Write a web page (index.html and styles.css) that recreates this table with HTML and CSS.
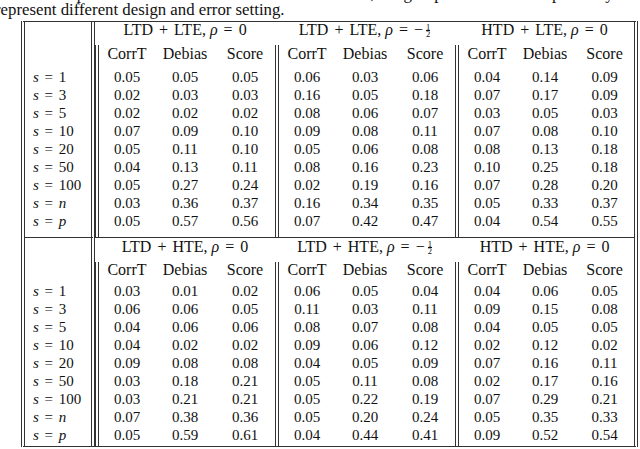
FILE: index.html
```html
<!DOCTYPE html>
<html lang="en">
<head>
  <meta charset="UTF-8" />
  <title>Empirical sizes</title>
  <link rel="stylesheet" href="styles.css">
</head>
<body>
  <p class="caption">Table 2: Empirical sizes of the tests at the nominal level, the groups of columns respectively<br>represent different design and error setting.</p>

  <table class="results">
    <colgroup>
      <col class="c-lab">
      <col class="c-num"><col class="c-num"><col class="c-num">
      <col class="c-num"><col class="c-num"><col class="c-num">
      <col class="c-num"><col class="c-num"><col class="c-end">
    </colgroup>
    <tbody class="block one">
      <tr class="head1">
        <td class="lab"></td>
        <th colspan="3">LTD <span class="op">+</span> LTE, <i>ρ</i> <span class="op">=</span> 0</th>
        <th colspan="3">LTD <span class="op">+</span> LTE, <i>ρ</i> <span class="op">=</span> −<span class="frac"><span>1</span><span class="den">2</span></span></th>
        <th colspan="3">HTD <span class="op">+</span> LTE, <i>ρ</i> <span class="op">=</span> 0</th>
      </tr>
      <tr class="head2">
        <td class="lab"></td>
        <th class="first">CorrT</th><th>Debias</th><th>Score</th>
        <th class="first">CorrT</th><th>Debias</th><th>Score</th>
        <th class="first">CorrT</th><th>Debias</th><th>Score</th>
      </tr>
      <tr><td class="lab"><i>s</i> <span class="op">=</span> 1</td><td class="first">0.05</td><td>0.05</td><td>0.05</td><td class="first">0.06</td><td>0.03</td><td>0.06</td><td class="first">0.04</td><td>0.14</td><td>0.09</td></tr>
      <tr><td class="lab"><i>s</i> <span class="op">=</span> 3</td><td class="first">0.02</td><td>0.03</td><td>0.03</td><td class="first">0.16</td><td>0.05</td><td>0.18</td><td class="first">0.07</td><td>0.17</td><td>0.09</td></tr>
      <tr><td class="lab"><i>s</i> <span class="op">=</span> 5</td><td class="first">0.02</td><td>0.02</td><td>0.02</td><td class="first">0.08</td><td>0.06</td><td>0.07</td><td class="first">0.03</td><td>0.05</td><td>0.03</td></tr>
      <tr><td class="lab"><i>s</i> <span class="op">=</span> 10</td><td class="first">0.07</td><td>0.09</td><td>0.10</td><td class="first">0.09</td><td>0.08</td><td>0.11</td><td class="first">0.07</td><td>0.08</td><td>0.10</td></tr>
      <tr><td class="lab"><i>s</i> <span class="op">=</span> 20</td><td class="first">0.05</td><td>0.11</td><td>0.10</td><td class="first">0.05</td><td>0.06</td><td>0.08</td><td class="first">0.08</td><td>0.13</td><td>0.18</td></tr>
      <tr><td class="lab"><i>s</i> <span class="op">=</span> 50</td><td class="first">0.04</td><td>0.13</td><td>0.11</td><td class="first">0.08</td><td>0.16</td><td>0.23</td><td class="first">0.10</td><td>0.25</td><td>0.18</td></tr>
      <tr><td class="lab"><i>s</i> <span class="op">=</span> 100</td><td class="first">0.05</td><td>0.27</td><td>0.24</td><td class="first">0.02</td><td>0.19</td><td>0.16</td><td class="first">0.07</td><td>0.28</td><td>0.20</td></tr>
      <tr><td class="lab"><i>s</i> <span class="op">=</span> <i>n</i></td><td class="first">0.03</td><td>0.36</td><td>0.37</td><td class="first">0.16</td><td>0.34</td><td>0.35</td><td class="first">0.05</td><td>0.33</td><td>0.37</td></tr>
      <tr class="last"><td class="lab"><i>s</i> <span class="op">=</span> <i>p</i></td><td class="first">0.05</td><td>0.57</td><td>0.56</td><td class="first">0.07</td><td>0.42</td><td>0.47</td><td class="first">0.04</td><td>0.54</td><td>0.55</td></tr>
    </tbody>
    <tbody class="block two">
      <tr class="head1">
        <td class="lab"></td>
        <th colspan="3">LTD <span class="op">+</span> HTE, <i>ρ</i> <span class="op">=</span> 0</th>
        <th colspan="3">LTD <span class="op">+</span> HTE, <i>ρ</i> <span class="op">=</span> −<span class="frac"><span>1</span><span class="den">2</span></span></th>
        <th colspan="3">HTD <span class="op">+</span> HTE, <i>ρ</i> <span class="op">=</span> 0</th>
      </tr>
      <tr class="head2">
        <td class="lab"></td>
        <th class="first">CorrT</th><th>Debias</th><th>Score</th>
        <th class="first">CorrT</th><th>Debias</th><th>Score</th>
        <th class="first">CorrT</th><th>Debias</th><th>Score</th>
      </tr>
      <tr><td class="lab"><i>s</i> <span class="op">=</span> 1</td><td class="first">0.03</td><td>0.01</td><td>0.02</td><td class="first">0.06</td><td>0.05</td><td>0.04</td><td class="first">0.04</td><td>0.06</td><td>0.05</td></tr>
      <tr><td class="lab"><i>s</i> <span class="op">=</span> 3</td><td class="first">0.06</td><td>0.06</td><td>0.05</td><td class="first">0.11</td><td>0.03</td><td>0.11</td><td class="first">0.09</td><td>0.15</td><td>0.08</td></tr>
      <tr><td class="lab"><i>s</i> <span class="op">=</span> 5</td><td class="first">0.04</td><td>0.06</td><td>0.06</td><td class="first">0.08</td><td>0.07</td><td>0.08</td><td class="first">0.04</td><td>0.05</td><td>0.05</td></tr>
      <tr><td class="lab"><i>s</i> <span class="op">=</span> 10</td><td class="first">0.04</td><td>0.02</td><td>0.02</td><td class="first">0.09</td><td>0.06</td><td>0.12</td><td class="first">0.02</td><td>0.12</td><td>0.02</td></tr>
      <tr><td class="lab"><i>s</i> <span class="op">=</span> 20</td><td class="first">0.09</td><td>0.08</td><td>0.08</td><td class="first">0.04</td><td>0.05</td><td>0.09</td><td class="first">0.07</td><td>0.16</td><td>0.11</td></tr>
      <tr><td class="lab"><i>s</i> <span class="op">=</span> 50</td><td class="first">0.03</td><td>0.18</td><td>0.21</td><td class="first">0.05</td><td>0.11</td><td>0.08</td><td class="first">0.02</td><td>0.17</td><td>0.16</td></tr>
      <tr><td class="lab"><i>s</i> <span class="op">=</span> 100</td><td class="first">0.03</td><td>0.21</td><td>0.21</td><td class="first">0.05</td><td>0.22</td><td>0.19</td><td class="first">0.07</td><td>0.29</td><td>0.21</td></tr>
      <tr><td class="lab"><i>s</i> <span class="op">=</span> <i>n</i></td><td class="first">0.07</td><td>0.38</td><td>0.36</td><td class="first">0.05</td><td>0.20</td><td>0.24</td><td class="first">0.05</td><td>0.35</td><td>0.33</td></tr>
      <tr class="last"><td class="lab"><i>s</i> <span class="op">=</span> <i>p</i></td><td class="first">0.05</td><td>0.59</td><td>0.61</td><td class="first">0.04</td><td>0.44</td><td>0.41</td><td class="first">0.09</td><td>0.52</td><td>0.54</td></tr>
    </tbody>
  </table>
</body>
</html>
```

FILE: styles.css
```css
html, body {
  margin: 0;
  padding: 0;
  background: #fff;
  color: #111;
  font-family: "Liberation Serif", "Times New Roman", serif;
  font-size: 15px;
  overflow: hidden;
}

.caption {
  margin: -14px 0 0 -5px;
  font-size: 16.8px;
  line-height: 16px;
  white-space: nowrap;
}

/* table: separate borders so every rule lands on a known pixel */
.results {
  border-collapse: separate;
  border-spacing: 0;
  table-layout: fixed;
  width: 617px;
  margin: 3px 0 0 21px;
  border-top: 1px solid #333;
  border-bottom: 1px solid #333;
  border-left: 4px double #333;
  border-right: 4px double #333;
}
.c-lab { width: 70px; }
.c-num { width: 60px; }
.c-end { width: 59px; }

.results th,
.results td {
  padding: 0;
  line-height: 18px;
  font-weight: normal;
  text-align: center;
  white-space: nowrap;
}
.results td.lab {
  text-align: left;
  padding-left: 8px;
  border-right: 4px double #333;
}
.results .first { border-left: 4px double #333; }

.op { margin: 0 2px; }

/* header rows */
.head1 th { font-size: 16px; }
.head2 th { font-size: 16px; }
.results .head1 th, .results .head1 td {
  line-height: 16px;
  padding-bottom: 7px;
}
.results .head2 th, .results .head2 td {
  line-height: 16px;
  padding-top: 1px;
  padding-bottom: 6px;
}
.results .one .last td { padding-bottom: 7px; }

.results .two .head1 th, .results .two .head1 td {
  border-top: 1px solid #333;
  padding-top: 1px;
  padding-bottom: 7px;
}
.results .two .head2 th, .results .two .head2 td {
  padding-top: 0;
  padding-bottom: 4px;
}
.results .two .last td { padding-bottom: 2px; }

.frac {
  display: inline-block;
  vertical-align: -2px;
  margin-left: 2px;
  font-size: 8.5px;
  line-height: 6px;
  text-align: center;
  padding: 0 1px;
}
.frac span { display: block; }
.frac .den { border-top: 1px solid #111; }
```
